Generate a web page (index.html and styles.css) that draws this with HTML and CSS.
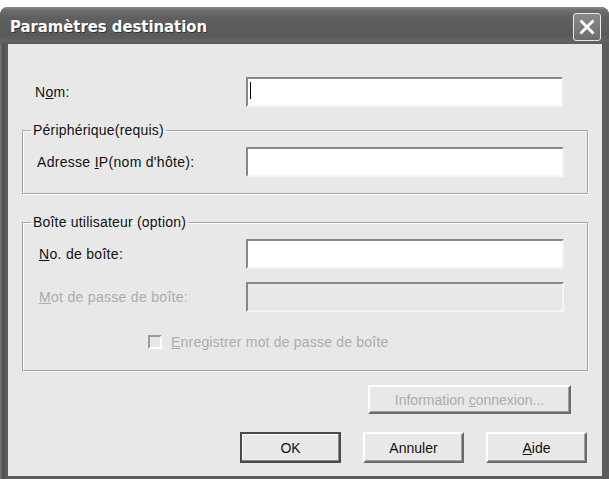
FILE: index.html
```html
<!DOCTYPE html>
<html lang="fr">
<head>
<meta charset="utf-8">
<title>Paramètres destination</title>
<link rel="stylesheet" href="styles.css">
</head>
<body>
<div class="window">
  <div class="titlebar">
    <span class="title">Paramètres destination</span>
    <span class="close">
      <svg width="18" height="18" viewBox="0 0 18 18"><path d="M3.5 3.5 L14.5 14.5 M14.5 3.5 L3.5 14.5" stroke="#fff" stroke-width="2.8" stroke-linecap="square"/></svg>
    </span>
  </div>
  <div class="client">
    <div class="row row-top">
      <label class="lbl lbl-top">N<u>o</u>m:</label>
      <div class="field field-nom"><span class="caret"></span></div>
    </div>

    <fieldset class="group group-1">
      <legend>Périphérique(requis)</legend>
      <div class="row">
        <label class="lbl">Adresse <u>I</u>P(nom d'hôte):</label>
        <div class="field"></div>
      </div>
    </fieldset>

    <fieldset class="group group-2">
      <legend>Boîte utilisateur (option)</legend>
      <div class="row">
        <label class="lbl lbl-g2"><u>N</u>o. de boîte:</label>
        <div class="field"></div>
      </div>
      <div class="row row-gap">
        <label class="lbl lbl-g2 disabled"><u>M</u>ot de passe de boîte:</label>
        <div class="field field-disabled"></div>
      </div>
      <div class="check-row">
        <span class="checkbox"></span>
        <span class="disabled"><u>E</u>nregistrer mot de passe de boîte</span>
      </div>
    </fieldset>

    <div class="info-row">
      <button class="btn btn-info disabled">Information <u>c</u>onnexion...</button>
    </div>
    <div class="btn-row">
      <button class="btn btn-default">OK</button>
      <button class="btn">Annuler</button>
      <button class="btn"><u>A</u>ide</button>
    </div>
  </div>
</div>
</body>
</html>
```

FILE: styles.css
```css
html, body {
  margin: 0;
  padding: 0;
  background: #ffffff;
}
body {
  width: 609px;
  height: 479px;
  overflow: hidden;
}
.window {
  margin-top: 7px;
  height: 472px;
  background: linear-gradient(to right, #7a7a7a 0, #4e4e4e 3px, #5c5c5c 6px, #5c5c5c 100%);
  border-radius: 8px 8px 0 0;
  display: flex;
  flex-direction: column;
  box-sizing: border-box;
}
.titlebar {
  height: 37px;
  flex: none;
  display: flex;
  align-items: center;
  justify-content: space-between;
  padding: 0 8px 0 10px;
  border-radius: 8px 8px 0 0;
  background: linear-gradient(to bottom, #8a8a8a 0, #6e6e6e 3px, #606060 10px, #5a5a5a 28px, #636363 35px, #5a5a5a 37px);
}
.title {
  font-family: "DejaVu Sans", sans-serif;
  font-stretch: condensed;
  font-weight: bold;
  font-size: 16.5px;
  color: #ffffff;
  text-shadow: 1px 1px 0 #333;
  margin-top: 2px;
}
.close {
  width: 26px;
  height: 26px;
  border: 1px solid #e8e8e8;
  border-radius: 3px;
  background: linear-gradient(to bottom, #8a8a8a, #6c6c6c);
  display: flex;
  align-items: center;
  justify-content: center;
  margin-top: 3px;
}
.client {
  flex: 1;
  margin: 0 7px 3px 8px;
  background: #e8e8e8;
  padding: 33px 14px 0 14px;
  font-family: "Liberation Sans", Arial, sans-serif;
  font-size: 14px;
  color: #111;
  box-sizing: border-box;
}
.row {
  display: flex;
  align-items: center;
  height: 30px;
}
.lbl {
  width: 209px;
  padding-left: 14px;
  flex: none;
  letter-spacing: 0.3px;
}
.lbl-top {
  width: 211px;
  padding-left: 13px;
}
.lbl-g2 {
  padding-left: 16px;
  width: 207px;
}
.field {
  width: 318px;
  height: 30px;
  box-sizing: border-box;
  background: #ffffff;
  border-top: 2px solid #878787;
  border-left: 2px solid #878787;
  border-bottom: 2px solid #f4f4f4;
  border-right: 2px solid #f4f4f4;
  position: relative;
}
.field-nom {
  width: 317px;
}
.field-disabled {
  background: #e8e8e8;
}
.caret {
  position: absolute;
  left: 2px;
  top: 3px;
  width: 1px;
  height: 17px;
  background: #000;
}
.group {
  margin: 0;
  padding: 0;
  border: 1px solid #a4a4a4;
  box-shadow: 1px 1px 0 #ffffff, inset 1px 1px 0 #ffffff;
  min-width: 0;
}
.group legend {
  margin-left: 8px;
  padding: 0 2px;
  line-height: 16px;
  letter-spacing: 0.2px;
}
.group-1 {
  margin-top: 15px;
  padding-top: 9px;
  padding-bottom: 16px;
}
.group-2 {
  margin-top: 20px;
  padding-top: 9px;
  padding-bottom: 0;
  height: 157px;
  box-sizing: border-box;
}
.row-gap {
  margin-top: 13px;
}
.check-row {
  display: flex;
  align-items: center;
  margin-top: 22px;
  padding-left: 125px;
  letter-spacing: 0.2px;
}
.checkbox {
  width: 14px;
  height: 14px;
  box-sizing: border-box;
  border-top: 2px solid #9a9a9a;
  border-left: 2px solid #9a9a9a;
  border-bottom: 2px solid #ffffff;
  border-right: 2px solid #ffffff;
  background: #e8e8e8;
  margin-right: 9px;
}
.disabled {
  color: #acacac;
}
.info-row {
  display: flex;
  justify-content: flex-end;
  margin-top: 14px;
  padding-right: 17px;
}
.btn-row {
  display: flex;
  justify-content: flex-end;
  gap: 22px;
  margin-top: 18px;
  padding-right: 1px;
}
.btn {
  font-family: "Liberation Sans", Arial, sans-serif;
  font-size: 14px;
  width: 101px;
  height: 31px;
  margin: 0;
  padding: 0;
  background: #e8e8e8;
  color: #111;
  box-sizing: border-box;
  border-top: 2px solid #ffffff;
  border-left: 2px solid #ffffff;
  border-right: 2px solid #6a6a6a;
  border-bottom: 2px solid #6a6a6a;
  box-shadow: inset -1px -1px 0 #a0a0a0;
}
.btn-default {
  border: 2px solid #4a4a4a;
  box-shadow: inset -1px -1px 0 #888, inset 1px 1px 0 #fff;
}
.btn-info {
  width: 203px;
  height: 29px;
  color: #acacac;
}
```
